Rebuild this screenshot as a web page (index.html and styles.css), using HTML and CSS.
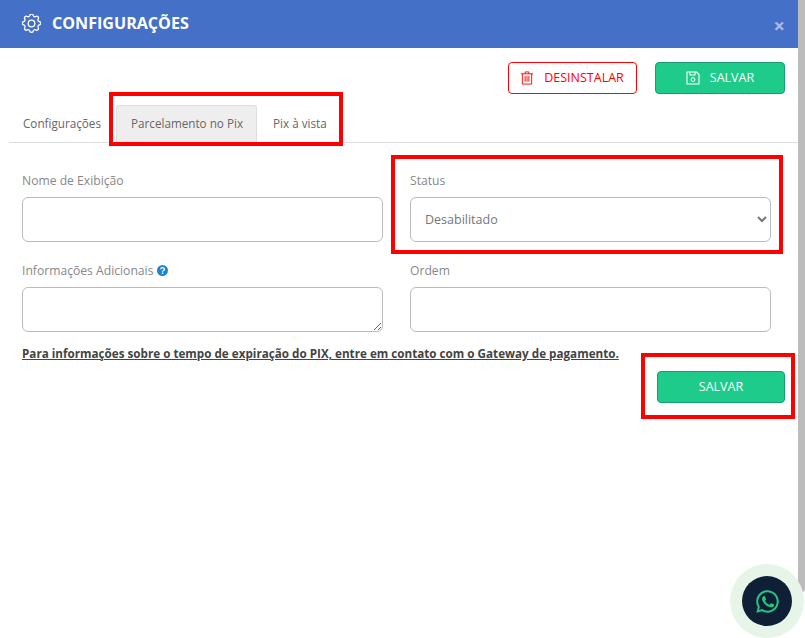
FILE: index.html
```html
<!DOCTYPE html>
<html lang="pt-BR">
<head>
<meta charset="utf-8">
<title>Configurações</title>
<link rel="stylesheet" href="styles.css">
</head>
<body>
<div class="app">
  <main class="modal">
    <header class="modal-header">
      <svg class="gear" viewBox="2.500 1.500 19 19" fill="none" stroke="currentColor" stroke-width="1.300" stroke-linejoin="round" stroke-linecap="round"><path d="M10.300 2.900c.4-1.800 3-1.800 3.400 0 .3 1.100 1.600 1.700 2.600 1.100 1.600-1 3.400.8 2.400 2.400-.6 1-.1 2.300 1.100 2.600 1.800.4 1.800 3 0 3.400-1.100.3-1.700 1.600-1.100 2.600 1 1.600-.8 3.400-2.400 2.400-1-.6-2.300-.1-2.600 1.100-.4 1.800-3 1.800-3.400 0-.3-1.100-1.600-1.700-2.600-1.100-1.600 1-3.400-.8-2.400-2.400.6-1 .1-2.300-1.100-2.600-1.800-.4-1.800-3 0-3.400 1.100-.3 1.700-1.600 1.100-2.600-1-1.600.8-3.400 2.400-2.400 1 .6 2.300.1 2.600-1.100z"/><circle cx="12" cy="11" r="3.300"/></svg>
      <h1 class="title">CONFIGURAÇÕES</h1>
      <span class="close">×</span>
    </header>
    <div class="actions">
      <button class="btn btn-danger" type="button">
        <svg class="btn-icon" viewBox="0 0 14 15" fill="none" stroke="currentColor" stroke-width="1"><path d="M.5 3h13M5 3V1h4v2M2 3v11h10V3M5 5.500v6M7 5.500v6M9 5.500v6"/></svg>
        <span class="btn-text">DESINSTALAR</span>
      </button>
      <button class="btn btn-success btn-top" type="button">
        <svg class="btn-icon" viewBox="0 0 14 14" fill="none" stroke="currentColor" stroke-width="1.100" stroke-linejoin="round"><path d="M1 1h9.500L13 3.500V13H1zM4 1v3h5V1"/><circle cx="7" cy="8.600" r="1.900"/></svg>
        <span class="btn-text">SALVAR</span>
      </button>
    </div>
    <nav class="tabs">
      <a class="tab tab-first">Configurações</a>
      <a class="tab tab-active">Parcelamento no Pix</a>
      <a class="tab tab-last">Pix à vista</a>
    </nav>
    <form class="form">
      <div class="field">
        <label class="label">Nome de Exibição</label>
        <input class="control" type="text">
      </div>
      <div class="field">
        <label class="label">Status</label>
        <select class="control control-select"><option>Desabilitado</option></select>
      </div>
      <div class="field">
        <label class="label">Informações Adicionais
          <svg class="help" viewBox="0 0 10 10"><circle cx="5" cy="5" r="5" fill="#1b86d3"/><path d="M3.400 3.900c0-2.100 3.300-2.100 3.300-.1 0 1.200-1.600 1.200-1.600 2.300" fill="none" stroke="#fff" stroke-width="1.200"/><rect x="4.400" y="6.800" width="1.300" height="1.300" fill="#fff"/></svg>
        </label>
        <textarea class="control"></textarea>
      </div>
      <div class="field">
        <label class="label">Ordem</label>
        <input class="control" type="text">
      </div>
    </form>
    <p class="note">Para informações sobre o tempo de expiração do PIX, entre em contato com o Gateway de pagamento.</p>
    <div class="footer">
      <button class="btn btn-success btn-bottom" type="button"><span class="btn-text">SALVAR</span></button>
    </div>
  </main>
  <div class="scrollbar"><div class="thumb"></div></div>
</div>

<div class="mark mark-tabs"></div>
<div class="mark mark-status"></div>
<div class="mark mark-save"></div>

<div class="whatsapp">
  <div class="whatsapp-inner">
    <svg viewBox="0 0 24 24" class="whatsapp-icon" fill="#25c77f"><path d="M12 1.200C6 1.200 1.200 6 1.200 12c0 1.900.5 3.800 1.500 5.400L1.200 22.800l5.500-1.400c1.600.9 3.400 1.300 5.300 1.300 6 0 10.800-4.800 10.800-10.700S18 1.200 12 1.200zm0 19.600c-1.700 0-3.300-.5-4.700-1.300l-.4-.2-3 .8.8-3-.2-.4c-.9-1.400-1.400-3-1.400-4.700C3.100 7.100 7.100 3.100 12 3.100s8.900 4 8.900 8.900-4 8.800-8.900 8.800z"/><path d="M8.600 6.900c-.2 0-.5 0-.8.3-.3.3-1 1-1 2.400s1 2.800 1.200 3c.1.2 2 3.100 4.900 4.300 2.400 1 2.900.8 3.400.7.5 0 1.700-.7 1.900-1.300.2-.7.2-1.200.2-1.300-.1-.1-.3-.2-.6-.4-.3-.1-1.700-.8-2-.9-.3-.1-.5-.2-.7.1-.2.3-.7.9-.9 1.100-.2.2-.3.2-.6.1-.3-.2-1.200-.5-2.300-1.400-.9-.8-1.400-1.700-1.600-2-.2-.3 0-.5.1-.6l.4-.5c.2-.2.2-.3.3-.5.1-.2.1-.4 0-.5-.1-.2-.7-1.600-.9-2.200-.3-.5-.5-.5-.7-.5z"/></svg>
  </div>
</div>
</body>
</html>
```
FILE: styles.css
```css
* { box-sizing: border-box; }
html, body { margin: 0; height: 100%; overflow: hidden; }
body {
  width: 805px;
  height: 638px;
  position: relative;
  background: #fff;
  font-family: "Open Sans", "Liberation Sans", sans-serif;
  font-size: 12px;
  color: #666;
}
.app { display: flex; height: 638px; }
.modal { flex: 1; min-width: 0; }
.scrollbar { width: 7px; background: #fff; }
.thumb { height: 592px; background: #bcbcbc; border-radius: 0 0 3px 3px; }

.modal-header {
  height: 48px;
  background: #4470c8;
  color: #fff;
  display: flex;
  align-items: center;
  padding: 0 13px 0 22px;
}
.gear { width: 19px; height: 19px; margin-right: 11px; margin-top: -1px; flex: none; }
.title { margin: 0; font-size: 16.100px; font-weight: 700; line-height: 46px; height: 48px; flex: 1; }
.close { font-size: 20px; font-weight: 700; color: #a9bde8; line-height: 18px; margin-top: 3px; }

.actions {
  display: flex;
  justify-content: flex-end;
  gap: 18px;
  padding: 14px 13px 0 0;
}
.btn {
  height: 32px;
  border-radius: 4px;
  font-family: inherit;
  font-size: 12.500px;
  display: inline-flex;
  align-items: center;
  justify-content: center;
  padding: 0;
  cursor: pointer;
}
.btn-text { position: relative; top: -1px; }
.btn-icon { width: 14px; height: 14px; margin-right: 10px; flex: none; }
.btn-danger { width: 129px; background: #fff; border: 1px solid #f00; color: #f00; padding-right: 1px; }
.btn-success { background: #1ecb8b; border: 1px solid #179d70; color: #fff; }
.btn-top { width: 130px; }
.btn-bottom { width: 128px; }

.tabs {
  display: flex;
  height: 49px;
  margin: 0 0 0 9px;
  padding: 11px 0 0 0;
  border-bottom: 1px solid #dedede;
}
.tab {
  height: 37px;
  padding: 0 14px;
  line-height: 35px;
  font-size: 11.700px;
  color: #666;
  border: 1px solid transparent;
  border-bottom: 0;
  border-radius: 3px 3px 0 0;
}
.tab-first { padding-left: 13px; padding-right: 13px; }
.tab-active { background: #eee; border-color: #dedede; margin-left: 1px; padding-right: 13px; }
.tab-last { margin-left: 1px; }

.form {
  display: grid;
  grid-template-columns: 361px 361px;
  column-gap: 27px;
  row-gap: 17px;
  padding: 26px 0 0 22px;
}
.field { display: flex; flex-direction: column; }
.label { font-size: 12.150px; line-height: 18px; height: 28px; color: #888; padding-top: 3px; }
.help { width: 11px; height: 11px; margin-left: 0; vertical-align: -1px; }
.control {
  width: 361px;
  height: 45px;
  border: 1px solid #bbb;
  border-radius: 6px;
  background: #fff;
  font-family: inherit;
  font-size: 12.500px;
  color: #777;
  margin: 0;
}
.control-select { padding: 0 0 0 10px; }
textarea.control { display: block; resize: both; }

.note {
  margin: 0;
  padding: 13px 0 0 22px;
  height: 31px;
  font-size: 11.680px;
  line-height: 18px;
  font-weight: 700;
  color: #444;
  text-decoration: underline;
  white-space: nowrap;
}
.footer { display: flex; justify-content: flex-end; padding: 8px 13px 0 0; }

.mark { position: absolute; border: 4px solid #f00; pointer-events: none; }
.mark-tabs { left: 109px; top: 92px; width: 234px; height: 54px; }
.mark-status { left: 391px; top: 155px; width: 392px; height: 99px; }
.mark-save { left: 641px; top: 353px; width: 154px; height: 66px; }

.whatsapp {
  position: absolute;
  left: 730px;
  top: 564px;
  width: 74px;
  height: 74px;
  border-radius: 50%;
  background: #e6f5e8;
  display: flex;
  align-items: center;
  justify-content: center;
}
.whatsapp-inner {
  width: 50px;
  height: 50px;
  border-radius: 50%;
  background: #0f2036;
  display: flex;
  align-items: center;
  justify-content: center;
}
.whatsapp-icon { width: 25px; height: 25px; }
```
